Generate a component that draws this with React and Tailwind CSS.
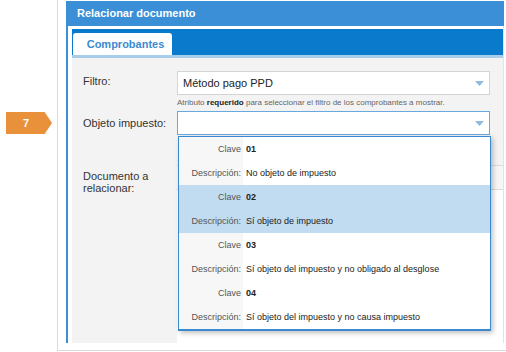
import React from "react";

const items = [
  { clave: "01", desc: "No objeto de impuesto" },
  { clave: "02", desc: "Sí objeto de impuesto", active: true },
  { clave: "03", desc: "Sí objeto del impuesto y no obligado al desglose" },
  { clave: "04", desc: "Sí objeto del impuesto y no causa impuesto" },
];

function Arrow() {
  return (
    <svg width="9" height="5" viewBox="0 0 9 5" className="mr-[5px]">
      <path d="M0 0 L9 0 L4.5 5 Z" fill="#8fbbe0" />
    </svg>
  );
}

export default function App() {
  return (
    <div className="w-[506px] h-[352px] bg-white flex overflow-hidden font-['Liberation_Sans',Arial,sans-serif] text-[#333]">
      <div className="w-[57px] shrink-0 pt-[112px] pl-[6px]">
        <div className="w-[46px] h-[22px] bg-[#e8913a] [clip-path:polygon(0_0,84%_0,100%_50%,84%_100%,0_100%)] flex items-center pl-[17px] text-white font-bold text-[11px]">
          7
        </div>
      </div>
      <div className="flex-1 h-[351px] border-l border-b border-[#dadada] pl-[8px] pr-[2px] pt-[1px] pb-[7px] flex">
        <div className="flex-1 flex flex-col">
          <div className="h-[25px] shrink-0 bg-[#3a8fd6] pl-[11px] flex items-center text-white font-bold text-[11px]">
            Relacionar documento
          </div>
          <div className="flex-1 flex flex-col border-l-2 border-[#3a8fd6] border-r border-r-[#e3e3e3] pt-[3px] pl-[4px]">
            <div className="h-[26px] shrink-0 bg-[#0a7acc] pl-[1px] pt-[4px] flex">
              <div className="w-[99px] h-[22px] bg-white rounded-t-[3px] flex items-center justify-center pl-[6px] text-[#3a8ad0] font-bold text-[11px]">
                Comprobantes
              </div>
            </div>
            <div className="h-[3px] shrink-0 bg-[#a8cdeb]" />
            <div className="flex-1 bg-[#f3f3f3] relative flex flex-col pt-[13px]">
              <div className="flex items-center">
                <div className="w-[105px] pl-[11px] text-[11px] -mt-[3px]">Filtro:</div>
                <div className="w-[313px] h-[24px] bg-white border border-[#d4d4d4] flex items-center justify-between pl-[5px] text-[11px] text-[#222]">
                  <span>Método pago PPD</span>
                  <Arrow />
                </div>
              </div>
              <div className="ml-[105px] mt-[2px] h-[12px] flex items-center text-[8px] text-[#666]">
                <span>
                  Atributo <b className="text-[#222]">requerido</b> para seleccionar el filtro de los comprobantes a mostrar.
                </span>
              </div>
              <div className="flex items-center mt-[2px]">
                <div className="w-[105px] pl-[11px] text-[11px]">Objeto impuesto:</div>
                <div className="w-[313px] h-[24px] bg-white border border-[#6aa9de] flex items-center justify-end">
                  <Arrow />
                </div>
              </div>
              <div className="flex-1 flex mt-[30px]">
                <div className="w-[105px] pl-[11px] pt-[5px] text-[11px] leading-[12px]">
                  Documento a<br />relacionar:
                </div>
                <div className="flex-1 bg-white border-t border-[#dcdcdc] flex flex-col">
                  <div className="h-[24px] bg-[#f6f6f6] border-b border-[#dcdcdc]" />
                </div>
              </div>

              <div className="absolute left-[106px] top-[78px] w-[313px] bg-white border border-[#3a88d0] border-b-2 shadow-[2px_2px_5px_rgba(0,0,0,0.25)]">
                {items.map((it) => (
                  <div key={it.clave} className={it.active ? "bg-[#c1dcf1]" : ""}>
                    <div className="flex h-[24px] items-center">
                      <div className={"w-[64px] h-full flex items-center justify-end pr-[2px] pt-[1px] text-[9px] text-[#555] " + (it.active ? "" : "bg-[#f7f7f7]")}>
                        Clave
                      </div>
                      <div className="pl-[3px] pt-[1px] text-[9px] font-bold text-[#222]">{it.clave}</div>
                    </div>
                    <div className="flex h-[24px] items-center">
                      <div className={"w-[64px] h-full flex items-center justify-end pr-[2px] pt-[1px] text-[9px] text-[#555] " + (it.active ? "" : "bg-[#f7f7f7]")}>
                        Descripción:
                      </div>
                      <div className="pl-[3px] pt-[1px] text-[9px] text-[#222]">{it.desc}</div>
                    </div>
                  </div>
                ))}
              </div>
            </div>
          </div>
        </div>
      </div>
    </div>
  );
}
